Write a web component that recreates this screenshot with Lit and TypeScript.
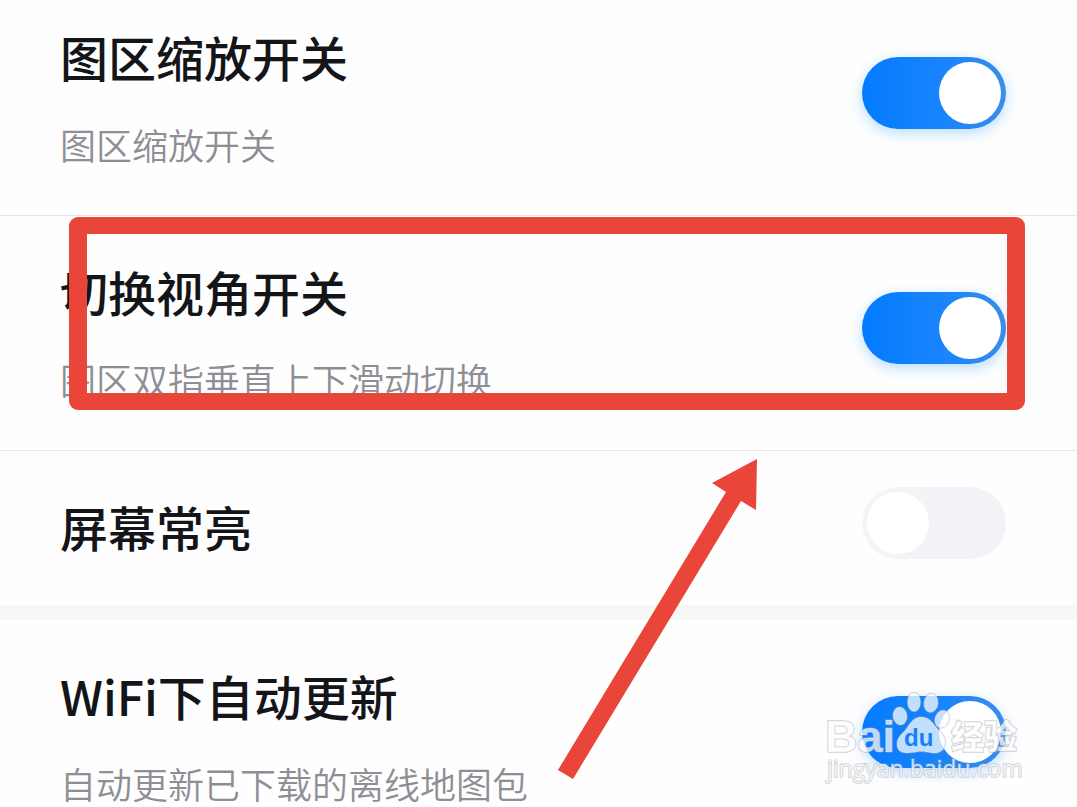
import { LitElement, html, css, nothing } from "lit";
import { customElement, property } from "lit/decorators.js";

interface Setting {
  id: string;
  title: string;
  desc?: string;
  on: boolean;
  framed?: boolean;
  sectionEnd?: boolean;
}

const SETTINGS: Setting[] = [
  { id: "zoom", title: "图区缩放开关", desc: "图区缩放开关", on: true },
  { id: "angle", title: "切换视角开关", desc: "图区双指垂直上下滑动切换", on: true, framed: true },
  { id: "awake", title: "屏幕常亮", on: false, sectionEnd: true },
  { id: "wifi", title: "WiFi下自动更新", desc: "自动更新已下载的离线地图包", on: true },
];

@customElement("setting-row")
export class SettingRow extends LitElement {
  @property({ attribute: false }) item!: Setting;

  static styles = css`
    :host {
      display: block;
    }
    .row {
      position: relative;
      display: flex;
      align-items: flex-start;
      justify-content: space-between;
      min-height: 234px;
      padding: 0 71px 0 60px;
      border-bottom: 1px solid #e6e6e8;
    }
    .row.single {
      min-height: 154px;
    }
    .row.section-end {
      border-bottom: 15px solid #f7f7f8;
    }
    .text {
      display: flex;
      flex-direction: column;
      gap: 42px;
      padding-top: 49px;
    }
    .title {
      font-size: 48px;
      line-height: 52px;
      font-weight: 500;
      color: #141518;
    }
    .desc {
      margin: 0;
      font-size: 36px;
      line-height: 40px;
      font-weight: 350;
      color: #8e8f95;
    }
    .switch {
      appearance: none;
      display: flex;
      flex: none;
      align-self: center;
      box-sizing: border-box;
      width: 144px;
      height: 72px;
      margin: 0 0 10px;
      padding: 5px;
      border-radius: 36px;
      background: linear-gradient(90deg, #f5f5f6, #f2f3f7 60%);
      cursor: pointer;
    }
    .switch::before {
      content: "";
      width: 62px;
      height: 62px;
      border-radius: 50%;
      background: #fff;
    }
    .switch:checked {
      justify-content: flex-end;
      background: linear-gradient(90deg, #047bff 0%, #1a85fc 60%, #3a8ee6 100%);
      box-shadow: 0 4px 14px rgba(60, 160, 255, 0.36);
    }
    .frame {
      position: absolute;
      inset: 1px 52px 40px 69px;
      border: 17px solid #e94539;
      border-right-width: 18px;
      border-left-width: 18px;
      border-radius: 9px;
      pointer-events: none;
    }
  `;

  render() {
    const s = this.item;
    return html`
      <div class="row ${s.desc ? "" : "single"} ${s.sectionEnd ? "section-end" : ""}">
        <div class="text">
          <label class="title" for=${s.id}>${s.title}</label>
          ${s.desc ? html`<p class="desc">${s.desc}</p>` : nothing}
        </div>
        <input class="switch" type="checkbox" role="switch" id=${s.id} .checked=${s.on} />
        ${s.framed ? html`<div class="frame"></div>` : nothing}
      </div>
    `;
  }
}

@customElement("app-root")
export class AppRoot extends LitElement {
  static styles = css`
    :host {
      display: block;
      position: relative;
      height: 100vh;
      overflow: hidden;
      background: #fefefe;
      font-family: "Noto Sans CJK SC", "Noto Sans", sans-serif;
    }
    .list {
      margin-top: -19px;
    }
    .arrow {
      position: absolute;
      left: 558px;
      top: 459px;
      pointer-events: none;
    }
    .watermark {
      position: absolute;
      right: 53px;
      top: 688px;
      pointer-events: none;
    }
    .mark {
      fill: #fff;
      fill-opacity: 0.74;
      stroke: #a0a4ac;
      stroke-opacity: 0.5;
      stroke-width: 1.6px;
      paint-order: stroke;
    }
    .latin {
      font: 700 45px "Liberation Sans", sans-serif;
    }
    .han {
      font: 900 33px "Noto Sans CJK SC", sans-serif;
    }
    .url {
      font: 400 23px "Open Sans", "Noto Sans", sans-serif;
    }
    .du {
      font: 700 24px "Liberation Sans", sans-serif;
      fill: #1680fa;
    }
  `;

  render() {
    return html`
      <main class="list">
        ${SETTINGS.map((s) => html`<setting-row .item=${s}></setting-row>`)}
      </main>
      <svg class="arrow" width="200" height="321" viewBox="0 0 200 321" aria-hidden="true">
        <path fill="#e94539" d="M199 0 154 24 168 33 0 311 15 320 183 42 198 51Z" />
      </svg>
      <svg class="watermark" width="200" height="100" viewBox="0 0 200 100" aria-hidden="true">
        <text class="mark latin" x="1" y="64">Bai</text>
        <g class="mark">
          <ellipse cx="76" cy="28" rx="7" ry="9" transform="rotate(-8 76 28)" />
          <ellipse cx="90" cy="14" rx="6.5" ry="9.5" />
          <ellipse cx="107" cy="15" rx="7" ry="9.5" transform="rotate(8 107 15)" />
          <ellipse cx="118" cy="31" rx="7" ry="9" transform="rotate(20 118 31)" />
          <path d="M97 29C105 29 108 34 112 39C117 45 122 48 121 56C120 65 112 66 106 64.5C99 63 95 63 89 64.5C79 66 73 64 73 56C73 48 79 46 83 40C87 34 90 29 97 29Z" />
        </g>
        <text class="du" x="80" y="58">du</text>
        <text class="mark han" x="127" y="61">经验</text>
        <text class="mark url" x="3" y="89">jingyan.baidu.com</text>
      </svg>
    `;
  }
}
